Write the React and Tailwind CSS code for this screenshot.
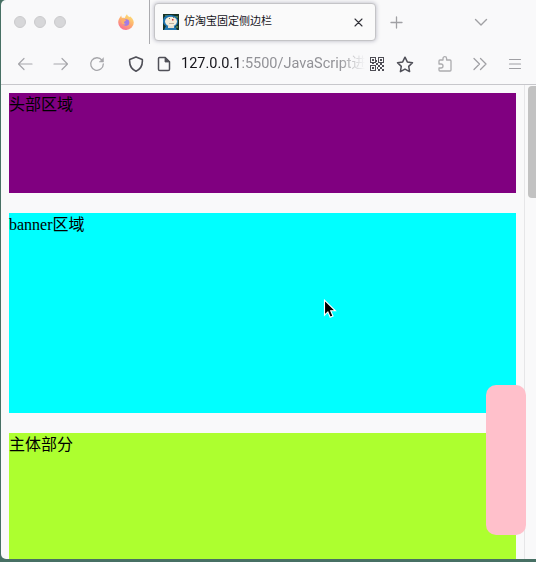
const stroke = { fill: 'none', stroke: 'currentColor', strokeLinecap: 'round', strokeLinejoin: 'round' };

function Icon({ className, width = 16, height = 16, weight = 1.3, children }) {
  return (
    <svg
      className={`shrink-0 ${className}`}
      width={width}
      height={height}
      viewBox={`0 0 ${width} ${height}`}
      strokeWidth={weight}
      {...stroke}
    >
      {children}
    </svg>
  );
}

function FirefoxLogo() {
  return (
    <svg className="ml-[52px] shrink-0 opacity-75" width="16" height="16" viewBox="0 0 16 16">
      <defs>
        <linearGradient id="flame" x1="0.8" y1="0" x2="0.25" y2="1">
          <stop offset="0" stopColor="#ffe04a" />
          <stop offset="0.5" stopColor="#ff9640" />
          <stop offset="1" stopColor="#fa3c78" />
        </linearGradient>
      </defs>
      <path
        d="M9 .2c.5 1.5 1.4 2 2.4 2.8l1-.6c1 1 3.4 3.2 3.4 6A7.7 7.7 0 0 1 8 16 7.7 7.7 0 0 1 .2 8.300C.2 6 1.300 4 2.200 3L3.200 1.600l.6 2.200C5.200 3.500 6.200 3.700 7 4 7.200 2.500 8 1 9 .2Z"
        fill="url(#flame)"
      />
      <circle cx="8" cy="8.600" r="3.300" fill="#8752e0" />
      <path d="M3.500 5.500c2-.8 3.200-.3 4.500.8-.3 1-1.800 1-2 2-.1 1 .8 1.700 2 1.500-1.500 1.500-4 .5-4.500-1.300Z" fill="#ff9a3c" />
    </svg>
  );
}

function Favicon() {
  return (
    <svg className="ml-2 shrink-0" width="16" height="16" viewBox="0 0 16 16">
      <path d="M0 0h16v16H0z" fill="#163225" />
      <path d="M2 1h3v1H2zM12 2h3v2h-3zM13 12h2v2h-2z" fill="#4c7950" />
      <path d="M0 7C0 3 3 1 7 1s8 2 8 6-2 6-7 6-8-2-8-6Z" fill="#1e73ad" />
      <ellipse cx="8" cy="7.500" rx="6" ry="4.800" fill="#f4eddb" />
      <path d="M3 12h9l2 4H1z" fill="#2478b0" />
      <path d="M5 12h6v2H5z" fill="#e8dfcf" />
      <path d="M9 5h1.500v1.500H9z" fill="#d62e36" />
      <path d="M6 4h1v1H6zM10 3h1v1h-1zM6 9h5v.6H6z" fill="#80776a" />
    </svg>
  );
}

function QrCode() {
  return (
    <svg className="ml-[5px] shrink-0 text-[#4e4d55]" width="14" height="14" viewBox="0 0 14 14" fill="currentColor" shapeRendering="crispEdges">
      <path fillRule="evenodd" d="M0 0h6v6H0zM1 1v4h4V1zM8 0h6v6H8zM9 1v4h4V1zM0 8h6v6H0zM1 9v4h4V9z" />
      <path d="M2 2h2v2H2zM10 2h2v2h-2zM2 10h2v2H2zM6 3h1v2H6zM6 6h2v2H6zM2 6h2v1H2zM10 6h2v2h-2zM8 8h2v2H8zM12 8h2v2h-2zM10 10h2v2h-2zM7 10h1v2H7zM8 12h2v2H8zM12 12h2v2h-2z" />
    </svg>
  );
}

function TabBar() {
  return (
    <div className="flex h-11">
      <div className="flex w-[149px] items-center border-r border-[#acacb0] pl-[13px]">
        <div className="flex gap-2">
          {[0, 1, 2].map((n) => (
            <span key={n} className="size-3 rounded-full border border-[#cbcbcd] bg-[#d7d7d9]" />
          ))}
        </div>
        <FirefoxLogo />
      </div>
      <div className="ml-1 mt-[3px] flex h-[38px] w-[222px] items-center rounded border border-[#c4c4c7] bg-[#fafafa] shadow-[0_0_4px_rgba(80,80,110,0.4)]">
        <Favicon />
        <span className="ml-[5px] flex-1 whitespace-nowrap text-[11px] leading-4 text-[#15141a]">仿淘宝固定侧边栏</span>
        <Icon className="mr-3 text-[#303037]" width={9} height={9} weight={1.1}>
          <path d="m1 1 7 7m0-7L1 8" />
        </Icon>
      </div>
      <div className="flex items-center">
        <Icon className="ml-[14px] text-[#a0a0a4]" width={13} height={13}>
          <path d="M6.500 1v11M1 6.500h11" />
        </Icon>
        <Icon className="ml-[71px] text-[#a0a0a4]" width={14} height={9} weight={1.400}>
          <path d="m1.500 1.500 5.500 5.500 5.500-5.500" />
        </Icon>
      </div>
    </div>
  );
}

function NavBar() {
  return (
    <div className="flex h-[40px] items-center">
      <Icon className="ml-4 text-[#a7a7ab]" weight={1.200}>
        <path d="M15 8H1.500M7 2.500 1.500 8 7 13.500" />
      </Icon>
      <Icon className="ml-5 text-[#a7a7ab]" weight={1.200}>
        <path d="M1 8h13.500M9 2.500 14.500 8 9 13.500" />
      </Icon>
      <Icon className="ml-5 text-[#a7a7ab]" weight={1.300}>
        <path d="M13 4.200A6.300 6.300 0 1 0 14.300 8" />
        <path d="M14.500 2v4h-4z" fill="currentColor" strokeWidth="0.500" />
      </Icon>
      <Icon className="ml-[23px] text-[#505058]" weight={1.600}>
        <path d="m8 .9 6.300 2.500c.5 5.200-1.500 9.600-6.300 11.800C3.200 13 1.200 8.600 1.700 3.400Z" />
      </Icon>
      <Icon className="ml-3 text-[#505058]" weight={1.500}>
        <path d="M3.500 1.500h5.700l4.300 4.300v7.400q0 1.300-1.300 1.300H3.800q-1.300 0-1.300-1.300V2.500q0-1 1-1Z" />
        <path d="M9 1.500V6h4.500Z" fill="currentColor" strokeWidth="0.800" />
      </Icon>
      <div className="ml-[9px] w-[184px] overflow-hidden whitespace-nowrap text-[14.500px] leading-5 text-[#929297] [mask-image:linear-gradient(to_right,black_158px,transparent_184px)]">
        <span className="text-[#15141a]">127.0.0.1</span>:5500/JavaScript进阶
      </div>
      <QrCode />
      <Icon className="ml-[12px] text-[#505058]" width={18} height={17} weight={1.500}>
        <path d="m9 1.200 2.300 4.700 5.200.8-3.800 3.700.9 5.200L9 13.100l-4.600 2.500.9-5.200-3.800-3.700 5.200-.8Z" />
      </Icon>
      <Icon className="ml-[23px] text-[#acacaf]">
        <path d="M2 7V5q0-1 1-1h3V2.500a1.800 1.800 0 0 1 3.600 0V4H13q1 0 1 1v9q0 1-1 1H3q-1 0-1-1v-2h2a2 2 0 0 0 0-4H2Z" />
      </Icon>
      <Icon className="ml-[19px] text-[#a0a0a4]">
        <path d="m2 2.500 5.500 5.500L2 13.500m6.500-11L14 8l-5.500 5.500" />
      </Icon>
      <Icon className="ml-5 text-[#a0a0a4]" width={14} height={14} weight={1.200}>
        <path d="M1.500 2.500h11m-11 4.500h11m-11 4.500h11" />
      </Icon>
    </div>
  );
}

export default function App() {
  return (
    <div className="h-[562px] w-[536px] overflow-hidden bg-[#477064] pl-px pb-[3px] font-['Liberation_Sans','Noto_Sans_CJK_SC',sans-serif]">
      <div className="relative flex h-full w-full flex-col overflow-hidden rounded-bl-[5px] rounded-tl-[5px] bg-[#f9f9fa]">
        <header className="h-[85px] shrink-0 border-b border-[#c7c7cb] font-['Roboto','Noto_Sans_CJK_SC',sans-serif]">
          <TabBar />
          <NavBar />
        </header>
        <div className="flex min-h-0 flex-1">
          <main className="flex w-[525px] flex-col gap-5 overflow-hidden pl-2 pr-2 pt-2 font-['Liberation_Serif','Noto_Sans_CJK_SC',serif] text-[16px] leading-6 text-black">
            <section className="h-[100px] shrink-0 bg-[#800080]">头部区域</section>
            <section className="h-[200px] shrink-0 bg-[#00ffff]">banner区域</section>
            <section className="h-[250px] shrink-0 bg-[#adff2f]">主体部分</section>
          </main>
          <div className="flex-1 border-l border-[#e6e6e8] pl-[3px] pt-px">
            <div className="h-[112px] w-2 rounded-l-[4px] bg-[#c2c2c2]" />
          </div>
        </div>
        <aside className="absolute left-[485px] top-[385px] h-[150px] w-10 rounded-[10px] bg-[#ffc0cb]" />
        <svg className="absolute left-[322px] top-[299px]" width="15" height="21" viewBox="0 0 15 21">
          <path
            d="M1.500 1.200v15l3.400-3.300 2.300 5.300 2.800-1.200-2.300-5.200h4.700Z"
            fill="#000"
            stroke="#fff"
            strokeWidth="1.100"
          />
        </svg>
      </div>
    </div>
  );
}
